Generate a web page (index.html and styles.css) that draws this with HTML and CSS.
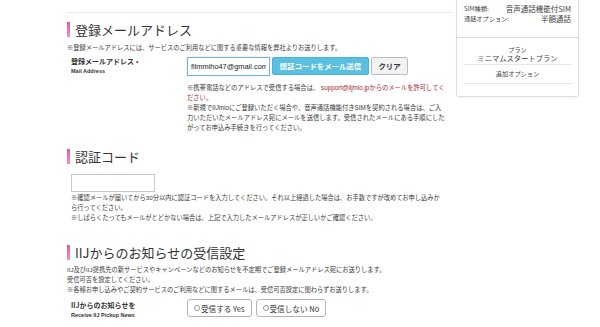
FILE: index.html
```html
<!DOCTYPE html>
<html lang="ja">
<head>
    <meta charset="UTF-8">
    <title>お申し込み - メールアドレス登録</title>
    <link rel="stylesheet" href="styles.css">
</head>
<body>
    <div class="page">
        <main class="main">
            <section class="sec">
                <h2 class="sec-title">登録メールアドレス</h2>
                <p class="lead">※登録メールアドレスには、サービスのご利用などに関する重要な情報を弊社よりお送りします。</p>
                <div class="field">
                    <div class="field-label">
                        <strong>登録メールアドレス<span class="req">•</span></strong>
                        <small>Mail Address</small>
                    </div>
                    <div class="field-body">
                        <div class="controls">
                            <input class="text-input is-focus" type="text" value="filmmiho47@gmail.com">
                            <button class="btn btn-info">認証コードをメール送信</button>
                            <button class="btn btn-default">クリア</button>
                        </div>
                        <div class="notes notes-mail">
                            <p>※携帯電話などのアドレスで受信する場合は、 <span class="warn">support@iijmio.jpからのメールを許可してく<br>ださい。</span></p>
                            <p>※新規でIIJmioにご登録いただく場合や、音声通話機能付きSIMを契約される場合は、ご入<br>力いただいたメールアドレス宛にメールを送信します。受信されたメールにある手順にした<br>がってお申込み手続きを行ってください。</p>
                        </div>
                    </div>
                </div>
            </section>

            <section class="sec sec-code">
                <h2 class="sec-title">認証コード</h2>
                <div class="code-body">
                    <input class="text-input code-input" type="text">
                    <div class="notes">
                        <p>※確認メールが届いてから30分以内に認証コードを入力してください。それ以上経過した場合は、お手数ですが改めてお申し込みか<br>ら行ってください。</p>
                        <p>※しばらくたってもメールがとどかない場合は、上記で入力したメールアドレスが正しいかご確認ください。</p>
                    </div>
                </div>
            </section>

            <section class="sec sec-news">
                <h2 class="sec-title">IIJからのお知らせの受信設定</h2>
                <div class="lead">
                    <p>IIJ及びIIJ提携先の新サービスやキャンペーンなどのお知らせを不定期でご登録メールアドレス宛にお送りします。<br>受信可否を設定してください。</p>
                    <p>※各種お申し込みやご契約サービスのご利用などに関するメールは、受信可否設定に関わらずお送りします。</p>
                </div>
                <div class="field">
                    <div class="field-label">
                        <strong>IIJからのお知らせを</strong>
                        <small>Receive IIJ Pickup News</small>
                    </div>
                    <div class="field-body radios">
                        <label class="radio"><input type="radio" name="news">受信する Yes</label>
                        <label class="radio"><input type="radio" name="news">受信しない No</label>
                    </div>
                </div>
            </section>
        </main>

        <aside class="side">
            <div class="card">
                <dl class="spec">
                    <div class="spec-row"><dt>SIM種類:</dt><dd>音声通話機能付SIM</dd></div>
                    <div class="spec-row"><dt>通話オプション:</dt><dd>半額通話</dd></div>
                </dl>
                <div class="plan">
                    <p class="plan-label">プラン</p>
                    <p class="plan-name">ミニマムスタートプラン</p>
                    <p class="plan-opt">追加オプション</p>
                </div>
            </div>
        </aside>
    </div>
</body>
</html>
```

FILE: styles.css
```css
* {
    margin: 0;
    padding: 0;
    box-sizing: border-box;
}
body {
    background-color: #fff;
    color: #333;
    font-family: "Noto Sans CJK JP", "Noto Sans", sans-serif;
}
.page {
    display: flex;
    padding-left: 67px;
}
.main {
    width: 385px;
    margin-top: 12px;
    border-top: 1px solid #e8e8e8;
}

/* 見出し */
.sec-title {
    margin-top: 9px;
    padding-left: 5px;
    border-left: 3px solid #e8589e;
    border-image: linear-gradient(#e3509a, #f398c5) 1;
    font-size: 13px;
    font-weight: normal;
    line-height: 15px;
    color: #333;
}
.sec-code .sec-title {
    margin-top: 16px;
}
.sec-news .sec-title {
    margin-top: 22px;
}

.lead {
    margin-top: 6px;
    font-family: "Liberation Sans", "Noto Sans CJK JP", sans-serif;
    font-size: 6.25px;
    line-height: 10px;
    color: #3a3a3a;
}
.sec-news .lead {
    margin-top: 5px;
}

/* フォーム行 */
.field {
    display: flex;
    margin-top: 4px;
}
.field-label {
    width: 120px;
    padding-left: 4px;
    flex-shrink: 0;
}
.field-label strong {
    display: block;
    font-size: 7px;
    line-height: 9px;
}
.field-label small {
    display: block;
    font-family: "Liberation Sans", Arial, sans-serif;
    font-size: 5.5px;
    font-weight: bold;
    line-height: 10px;
}
.req {
    color: #c0282d;
    margin-left: 2px;
}
.field-body {
    flex: 1;
}
.controls {
    display: flex;
    align-items: flex-start;
}
.text-input {
    display: block;
    width: 83px;
    height: 19px;
    padding: 0 3px;
    border: 1px solid #c8c8c8;
    font-family: "Liberation Sans", Arial, sans-serif;
    font-size: 7.4px;
    color: #222;
    outline: none;
}
.text-input.is-focus {
    border-color: #7aaede;
    box-shadow: 0 0 1px rgba(80, 150, 220, 0.5);
}
.btn {
    height: 18px;
    margin-left: 2px;
    border-radius: 2px;
    font-family: "Noto Sans CJK JP", sans-serif;
    font-size: 7.4px;
    font-weight: bold;
    line-height: 16px;
}
.btn-info {
    width: 97px;
    background-color: #5bc0e0;
    border: 1px solid #49b3d6;
    color: #fff;
}
.btn-default {
    width: 37px;
    background-color: #f2f2f2;
    border: 1px solid #bdbdbd;
    color: #333;
}

.notes {
    font-family: "Liberation Sans", "Noto Sans CJK JP", sans-serif;
    font-size: 6.25px;
    line-height: 10px;
    color: #3a3a3a;
}
.notes-mail {
    margin-top: 7px;
    font-size: 6.3px;
    white-space: nowrap;
}
.warn {
    color: #a3282c;
}

/* 認証コード */
.code-body {
    padding-left: 4px;
    margin-top: 10px;
}
.code-input {
    width: 84px;
    height: 18px;
}
.code-body .notes {
    margin-top: 1px;
    white-space: nowrap;
}

/* お知らせ */
.sec-news .field-label strong {
    margin-top: 2px;
}
.radios {
    display: flex;
    gap: 4px;
}
.radio {
    display: flex;
    align-items: center;
    height: 18px;
    padding: 0 6px;
    border: 1px solid #b5b5b5;
    border-radius: 3px;
    font-size: 7.6px;
    color: #333;
}
.radio input {
    appearance: none;
    width: 6px;
    height: 6px;
    margin-right: 1px;
    border: 1px solid #999;
    border-radius: 50%;
    background: #fff;
}

/* 右カラム */
.side {
    width: 123px;
    margin-left: 4px;
    margin-top: -6px;
}
.card {
    border: 1px solid #dedede;
    border-radius: 3px;
    box-shadow: 0 1px 2px rgba(0, 0, 0, 0.06);
    color: #444;
}
.spec {
    padding: 9px 7px 13px;
}
.spec-row {
    display: flex;
    justify-content: space-between;
    align-items: center;
    height: 10px;
}
.spec-row dt {
    font-size: 6.2px;
    line-height: 10px;
}
.spec-row dd {
    font-size: 7.5px;
    line-height: 10px;
}
.plan {
    border-top: 1px solid #dcdcdc;
    padding: 7px 7px 12px;
    text-align: center;
}
.plan-label {
    font-size: 6.2px;
    line-height: 9px;
}
.plan-name {
    font-size: 7.3px;
    line-height: 9px;
    padding-bottom: 1px;
    border-bottom: 1px solid #e6e6e6;
}
.plan-opt {
    font-size: 6.2px;
    line-height: 18px;
    border-bottom: 1px solid #e6e6e6;
}
```
